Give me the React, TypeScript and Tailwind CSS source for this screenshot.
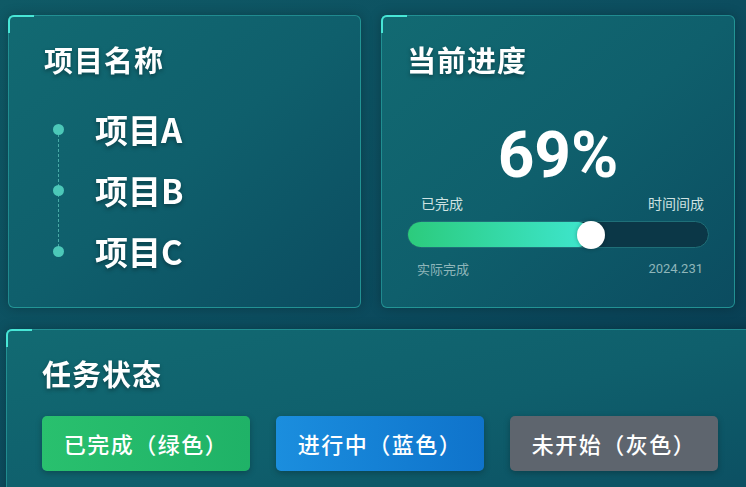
import React from 'react'

const font = { fontFamily: '"Noto Sans CJK SC", "Noto Sans", sans-serif' }

function Panel({ className = '', children }: { className?: string; children: React.ReactNode }) {
  return (
    <div
      className={`relative rounded-[6px] border border-[#2fb2ad]/60 bg-gradient-to-br from-[#126a72] via-[#0f5f6c] to-[#0b4c60] shadow-[0_0_12px_rgba(0,0,0,0.25)] ${className}`}
    >
      <div className="absolute -left-px -top-px h-[18px] w-[26px] rounded-tl-[6px] border-l-2 border-t-2 border-[#48e6d6]" />
      {children}
    </div>
  )
}

const items = ['项目A', '项目B', '项目C']

const statuses = [
  { label: '已完成（绿色）', cls: 'bg-gradient-to-r from-[#29c06e] to-[#1fb267]' },
  { label: '进行中（蓝色）', cls: 'bg-gradient-to-r from-[#1b8ede] to-[#0f73cb]' },
  { label: '未开始（灰色）', cls: 'bg-[#5e656e]' },
]

export default function App() {
  return (
    <div
      style={font}
      className="h-[487px] w-[746px] overflow-hidden bg-gradient-to-br from-[#0f5a66] via-[#0c4d5f] to-[#083a50] pl-[8px] pt-[15px] text-white"
    >
      <div className="flex gap-5">
        {/* 项目名称 */}
        <Panel className="h-[293px] w-[353px] pl-[35px] pt-[24px]">
          <h2 className="text-[29px] font-bold leading-[38px] tracking-[1px] drop-shadow-[0_2px_2px_rgba(0,0,0,0.35)]">项目名称</h2>
          <div className="relative mt-[21px] pl-[9px]">
            <div className="absolute left-[14px] top-[30px] bottom-[30px] border-l border-dashed border-[#5fc8bd]/70" />
            {items.map((it) => (
              <div key={it} className="flex h-[61px] items-center">
                <span className="relative z-10 h-[11px] w-[11px] rounded-full bg-[#4cc8b8]" />
                <span className="ml-[31px] text-[33px] font-bold drop-shadow-[0_2px_2px_rgba(0,0,0,0.35)]">{it}</span>
              </div>
            ))}
          </div>
        </Panel>

        {/* 当前进度 */}
        <Panel className="h-[293px] w-[354px] px-[25px] pt-[24px]">
          <h2 className="text-[29px] font-bold leading-[38px] tracking-[1px] drop-shadow-[0_2px_2px_rgba(0,0,0,0.35)]">当前进度</h2>
          <div
            className="mt-[46px] text-center text-[64px] font-bold leading-[64px]"
            style={{ fontFamily: 'Roboto, "Noto Sans", sans-serif' }}
          >
            69%
          </div>
          <div className="mt-[5px] flex justify-between pl-[14px] pr-[5px] text-[14px] leading-[20px] text-[#cfe3e2]">
            <span>已完成</span>
            <span>时间间成</span>
          </div>
          <div className="mt-[8px] h-[27px] w-full rounded-full border border-[#1f6f78] bg-[#0b3747]">
            <div className="relative h-full w-[61%] rounded-full bg-gradient-to-r from-[#2ccb7c] to-[#3fe6cf]">
              <span className="absolute right-[-14px] top-1/2 h-[28px] w-[28px] -translate-y-1/2 rounded-full bg-white shadow-[0_0_4px_rgba(0,0,0,0.3)]" />
            </div>
          </div>
          <div className="mt-[12px] flex justify-between pl-[10px] pr-[6px] text-[13px] leading-[18px] text-[#8fb6ba]">
            <span>实际完成</span>
            <span style={{ fontFamily: 'Roboto, sans-serif' }}>2024.231</span>
          </div>
        </Panel>
      </div>

      {/* 任务状态 */}
      <Panel className="-ml-[2px] mt-[21px] h-[190px] w-[780px] pl-[35px] pt-[24px]">
        <h2 className="text-[29px] font-bold leading-[38px] tracking-[1px] drop-shadow-[0_2px_2px_rgba(0,0,0,0.35)]">任务状态</h2>
        <div className="mt-[24px] flex gap-[26px]">
          {statuses.map((s) => (
            <div
              key={s.label}
              className={`flex h-[55px] w-[208px] items-center justify-center rounded-[5px] text-[22px] font-medium tracking-[1.5px] shadow-[0_2px_6px_rgba(0,0,0,0.25)] ${s.cls}`}
            >
              {s.label}
            </div>
          ))}
        </div>
      </Panel>
    </div>
  )
}
